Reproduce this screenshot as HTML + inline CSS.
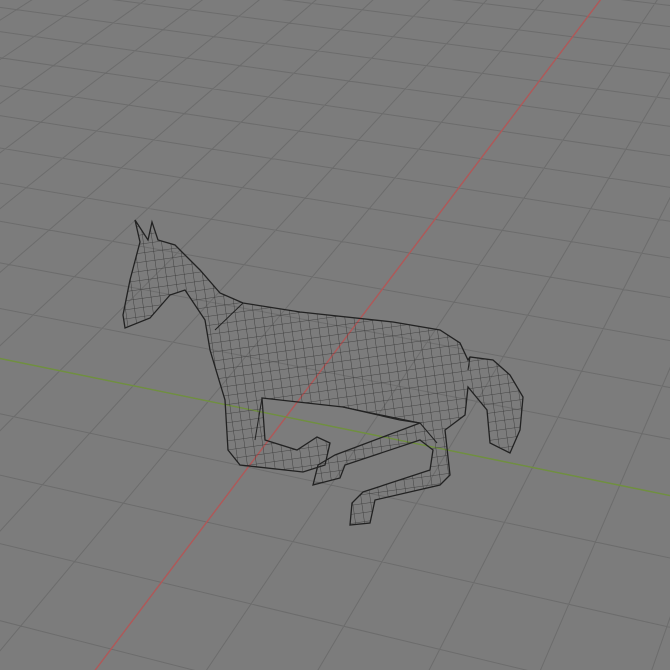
<!DOCTYPE html>
<html><head><meta charset="utf-8"><style>
html,body{margin:0;padding:0;background:#7c7c7c;width:670px;height:670px;overflow:hidden;position:relative}
svg{display:block;position:absolute;left:0;top:0}
</style></head><body>
<svg id="s" width="670" height="670" viewBox="0 0 670 670" xmlns="http://www.w3.org/2000/svg">
<defs>
<pattern id="mesh" width="9" height="9" patternUnits="userSpaceOnUse" patternTransform="rotate(-8)">
<path d="M0,0H9M0,0V9" stroke="#333" stroke-width="0.8" fill="none"/>
</pattern>
<clipPath id="hc"><path d="M135,220 L148,240 L152,222 L158,240 L175,245 L200,270 L220,293 L243,303 L300,312 L393,322 L440,330 L460,343 L468,360 L470,357 L493,360 L510,375 L523,397 L520,430 L510,453 L490,443 L487,410 L468,387 L465,415 L445,430 L450,475 L440,485 L375,500 L370,523 L350,525 L352,503 L363,492 L430,470 L433,450 L420,440 L345,465 L340,478 L313,485 L318,465 L335,455 L420,423 L400,420 L343,407 L280,400 L262,398 L265,440 L297,450 L317,437 L330,443 L325,465 L303,472 L240,465 L228,450 L225,400 L210,350 L205,320 L185,290 L170,295 L150,318 L125,328 L123,315 L130,280 L140,242 Z"/></clipPath>
</defs>
<rect width="670" height="670" fill="#7c7c7c"/>
<g id="grid" stroke="#6c6c6c" stroke-width="1" fill="none"></g>
<line id="red" stroke="#b05858" stroke-width="1.4"/>
<line id="green" stroke="#70903f" stroke-width="1.4"/>
<g clip-path="url(#hc)"><rect x="100" y="200" width="450" height="340" fill="url(#mesh)"/></g>
<path d="M135,220 L148,240 L152,222 L158,240 L175,245 L200,270 L220,293 L243,303 L300,312 L393,322 L440,330 L460,343 L468,360 L470,357 L493,360 L510,375 L523,397 L520,430 L510,453 L490,443 L487,410 L468,387 L465,415 L445,430 L450,475 L440,485 L375,500 L370,523 L350,525 L352,503 L363,492 L430,470 L433,450 L420,440 L345,465 L340,478 L313,485 L318,465 L335,455 L420,423 L400,420 L343,407 L280,400 L262,398 L265,440 L297,450 L317,437 L330,443 L325,465 L303,472 L240,465 L228,450 L225,400 L210,350 L205,320 L185,290 L170,295 L150,318 L125,328 L123,315 L130,280 L140,242 Z" fill="none" stroke="#222" stroke-width="1.3"/>
<path d="M468,370 L470,357 M420,423 L437,443 M262,398 L255,440 M243,303 L215,330 M343,407 L420,423" stroke="#222" stroke-width="1" fill="none"/>
</svg>
<script>
(function(){
var O={x:286,y:417},Vu={x:-5174,y:-700},Vv={x:1128,y:-700},su=-0.0144,sv=0.043;
function P(u,v){var w=1+su*u+sv*v;return [(su*u*Vu.x+sv*v*Vv.x+O.x)/w,(su*u*Vu.y+sv*v*Vv.y+O.y)/w];}
var g=document.getElementById('grid'),ns='http://www.w3.org/2000/svg',d='';
function seg(a,b){return 'M'+a[0].toFixed(1)+','+a[1].toFixed(1)+'L'+b[0].toFixed(1)+','+b[1].toFixed(1);}
for(var u=-80;u<=80;u++){var vmin=(0.03-1-su*u)/sv;d+=seg(P(u,vmin),P(u,400));}
for(var v=-30;v<=120;v++){var umax=(0.97+sv*v)/(-su);d+=seg(P(umax,v),P(-600,v));}
var p=document.createElementNS(ns,'path');p.setAttribute('d',d);g.appendChild(p);
function setL(id,a,b){var l=document.getElementById(id);l.setAttribute('x1',a[0]);l.setAttribute('y1',a[1]);l.setAttribute('x2',b[0]);l.setAttribute('y2',b[1]);}
setL('red',P(0,(0.03-1)/sv),P(0,400));
setL('green',P(0.97/(-su),0),P(-600,0));
})();
</script>
</body></html>
